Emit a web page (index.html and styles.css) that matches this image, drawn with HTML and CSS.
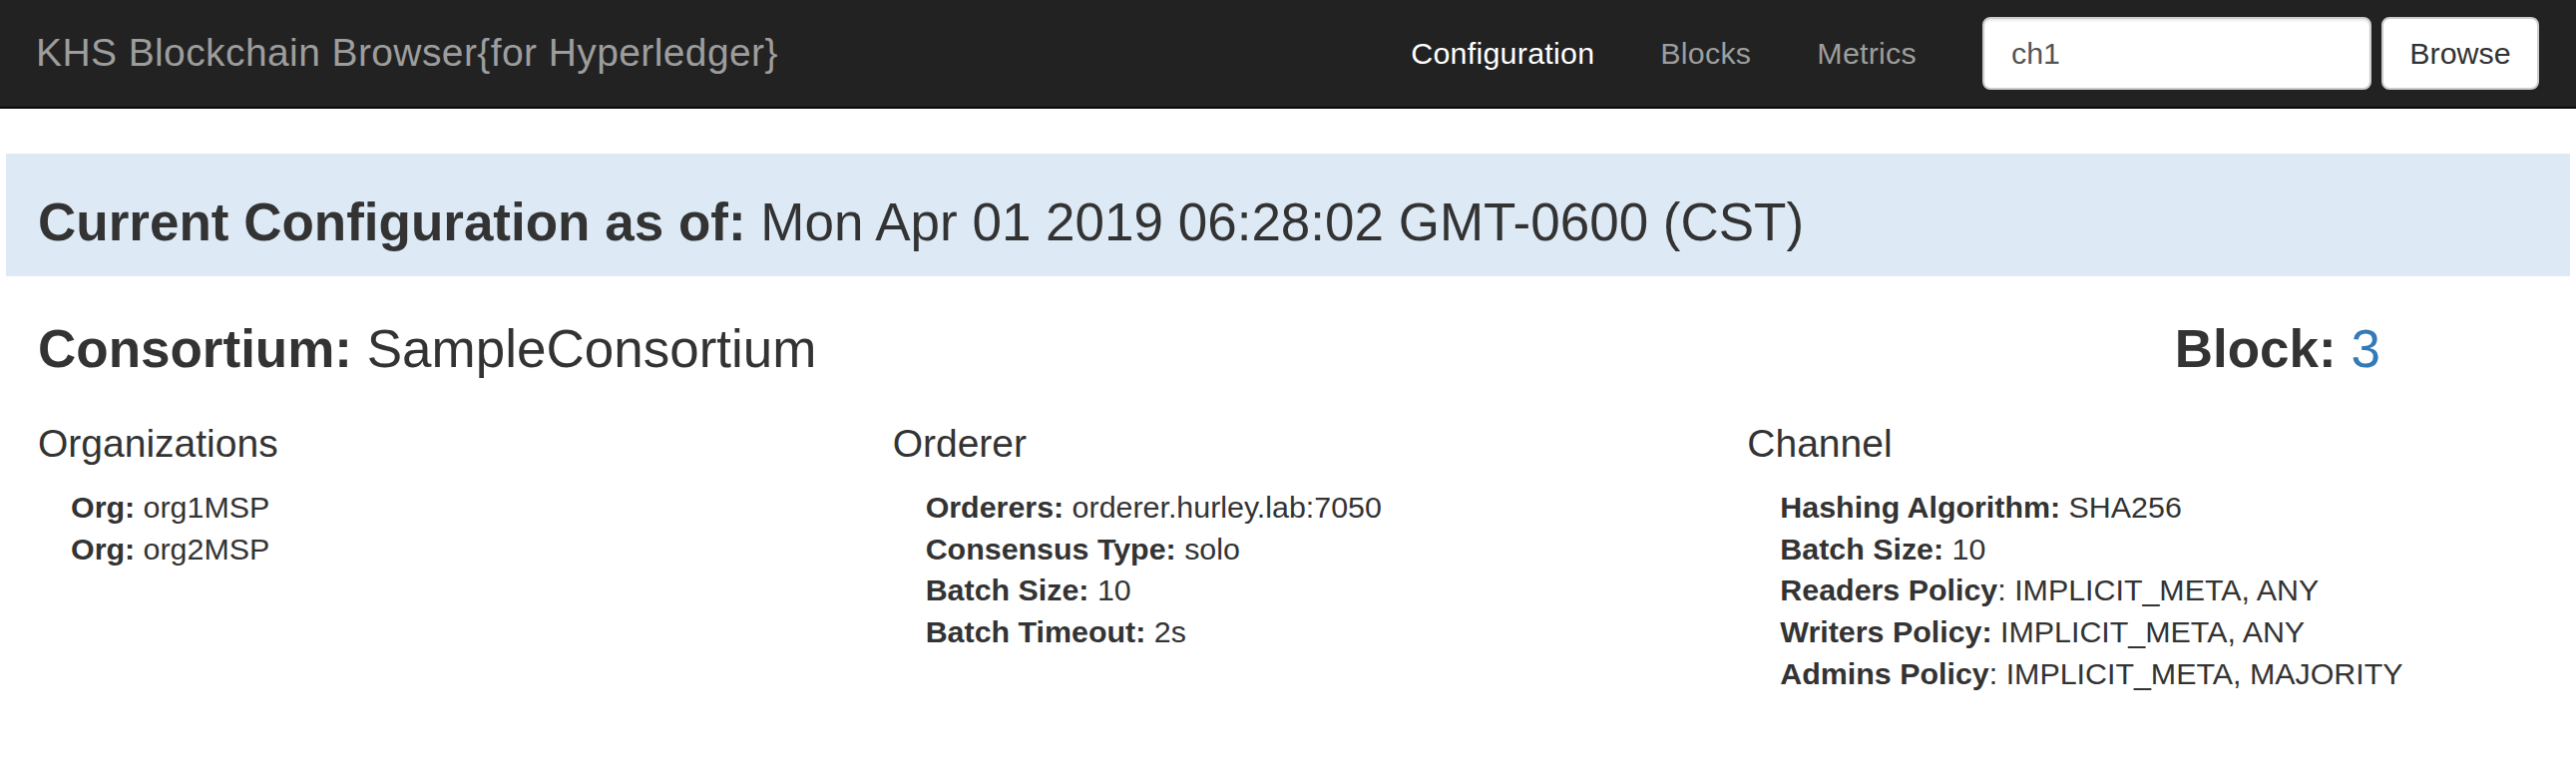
FILE: index.html
```html
<!DOCTYPE html>
<html lang="en">
<head>
    <meta charset="UTF-8">
    <meta name="viewport" content="width=device-width, initial-scale=1.0">
    <title>KHS Blockchain Browser</title>
    <link rel="stylesheet" href="styles.css">
</head>
<body>
<nav class="navbar">
    <div class="brand">KHS Blockchain Browser{for Hyperledger}</div>
    <ul class="nav-links">
        <li><a class="active" href="#">Configuration</a></li>
        <li><a href="#">Blocks</a></li>
        <li><a href="#">Metrics</a></li>
    </ul>
    <form class="channel-form" onsubmit="return false">
        <input type="text" id="channel" name="channel" value="ch1">
        <button type="submit">Browse</button>
    </form>
</nav>

<main class="page">
    <div class="banner">
        <h1><b>Current Configuration as of:</b> Mon Apr 01 2019 06:28:02 GMT-0600 (CST)</h1>
    </div>

    <div class="summary">
        <h2 class="col"><b>Consortium:</b> SampleConsortium</h2>
        <h2 class="col"><b>Block:</b> <a href="#">3</a></h2>
    </div>

    <div class="sections">
        <section class="col">
            <h3>Organizations</h3>
            <ul class="props">
                <li><b>Org:</b> org1MSP</li>
                <li><b>Org:</b> org2MSP</li>
            </ul>
        </section>
        <section class="col">
            <h3>Orderer</h3>
            <ul class="props">
                <li><b>Orderers:</b> orderer.hurley.lab:7050</li>
                <li><b>Consensus Type:</b> solo</li>
                <li><b>Batch Size:</b> 10</li>
                <li><b>Batch Timeout:</b> 2s</li>
            </ul>
        </section>
        <section class="col">
            <h3>Channel</h3>
            <ul class="props">
                <li><b>Hashing Algorithm:</b> SHA256</li>
                <li><b>Batch Size:</b> 10</li>
                <li><b>Readers Policy</b>: IMPLICIT_META, ANY</li>
                <li><b>Writers Policy:</b> IMPLICIT_META, ANY</li>
                <li><b>Admins Policy</b>: IMPLICIT_META, MAJORITY</li>
            </ul>
        </section>
    </div>
</main>
</body>
</html>
```

FILE: styles.css
```css
body {
    margin: 0;
    font-family: "Liberation Sans", Arial, sans-serif;
    font-size: 30.4px;
    line-height: 41.7px;
    color: #333;
    background: #fff;
}

/* top bar */
.navbar {
    display: flex;
    align-items: center;
    height: 107px;
    padding: 0 37px 0 36px;
    background: #222;
    border-bottom: 2px solid #080808;
}

.brand {
    flex: 1;
    font-size: 39px;
    line-height: 107px;
    margin-top: -3px;
    letter-spacing: 0.4px;
    color: #9d9d9d;
}

.nav-links {
    display: flex;
    margin: 0 33px 0 0;
    padding: 0;
    list-style: none;
}

.nav-links a {
    display: block;
    padding: 0 33px;
    line-height: 107px;
    letter-spacing: 0.25px;
    color: #9d9d9d;
    text-decoration: none;
}

.nav-links a.active {
    color: #fff;
}

.channel-form {
    display: flex;
    gap: 10px;
}

.channel-form input {
    width: 390px;
    height: 73px;
    box-sizing: border-box;
    padding: 0 27px;
    font-family: inherit;
    font-size: 30.4px;
    color: #555;
    background: #fff;
    border: 2px solid #ccc;
    border-radius: 8px;
    box-shadow: inset 0 2px 2px rgba(0, 0, 0, 0.075);
}

.channel-form button {
    width: 158px;
    height: 73px;
    font-family: inherit;
    font-size: 30.4px;
    color: #333;
    background: #fff;
    border: 2px solid #ccc;
    border-radius: 8px;
    cursor: pointer;
}

/* content */
.page {
    margin-top: 45px;
    padding: 0 6px;
}

.banner {
    padding: 40px 32px 25px;
    background: #ddeaf6;
}

.banner h1 {
    margin: 0;
    font-size: 53px;
    line-height: 58px;
    font-weight: normal;
}

.col {
    padding: 0 32px;
}

.summary {
    display: grid;
    grid-template-columns: 10fr 2fr;
    margin-top: 44px;
}

.summary h2 {
    margin: 0;
    font-size: 53px;
    line-height: 58px;
    font-weight: normal;
}

.summary a {
    color: #337ab7;
    text-decoration: none;
}

.sections {
    display: grid;
    grid-template-columns: 1fr 1fr 1fr;
    margin-top: 44px;
}

.sections h3 {
    margin: 0;
    font-size: 39px;
    line-height: 43px;
    font-weight: normal;
}

.props {
    margin: 22px 0 0;
    padding: 0 0 0 33px;
    list-style: none;
}
```
